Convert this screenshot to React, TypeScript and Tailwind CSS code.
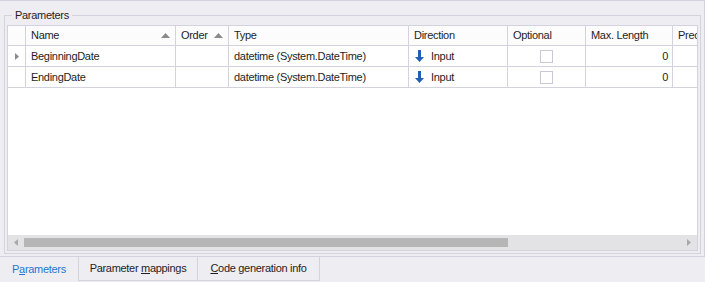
import React from "react";

const cols = [
  { key: "ind", w: 18 },
  { key: "name", w: 150, label: "Name", sort: true },
  { key: "order", w: 53, label: "Order", sort: true },
  { key: "type", w: 180, label: "Type" },
  { key: "dir", w: 99, label: "Direction" },
  { key: "opt", w: 78, label: "Optional" },
  { key: "max", w: 87, label: "Max. Length" },
  { key: "prec", w: 60, label: "Precision" },
];

const rows = [
  { name: "BeginningDate", current: true },
  { name: "EndingDate", current: false },
];

function SortUp() {
  return (
    <svg width="9" height="5" viewBox="0 0 9 5" className="shrink-0">
      <path d="M0 5 L4.5 0 L9 5 Z" fill="#8a8a8a" />
    </svg>
  );
}

function DownArrow() {
  return (
    <svg width="9" height="12" viewBox="0 0 9 12">
      <path d="M3 0 H6 V7 H9 L4.5 12 L0 7 H3 Z" fill="#1f5fb5" />
    </svg>
  );
}

function Cell({ w, className = "", children }: { w: number; className?: string; children?: React.ReactNode }) {
  return (
    <div
      className={`flex h-full shrink-0 items-center border-r border-[#d3d3dd] ${className}`}
      style={{ width: w }}
    >
      {children}
    </div>
  );
}

export default function App() {
  return (
    <div
      className="h-[282px] w-[705px] overflow-hidden bg-[#eeedf2] text-[11px] tracking-[-0.3px] text-[#1e1e1e]"
      style={{ fontFamily: "Tahoma, 'Liberation Sans', Arial, sans-serif" }}
    >
      {/* tab page */}
      <div className="h-[257px] border-t border-r border-b border-[#d3d3dd] pl-1 pr-[3px] pt-[14px]">
        <div className="relative h-[239px] border border-[#d3d3dd] px-[2px] pt-[9px]">
          <span className="absolute -top-[7px] left-[7px] bg-[#eeedf2] px-[3px] leading-[13px]">
            Parameters
          </span>
          <div className="flex h-[226px] flex-col overflow-hidden border border-[#d3d3dd] bg-white">
            {/* header */}
            <div className="flex h-[20px] shrink-0 border-b border-[#d3d3dd] bg-[#fcfcfd]">
              {cols.map((c) => (
                <Cell key={c.key} w={c.w} className="px-[5px]">
                  {c.label && <span className="flex-1 whitespace-nowrap">{c.label}</span>}
                  {c.sort && <SortUp />}
                </Cell>
              ))}
            </div>
            {rows.map((r) => (
              <div key={r.name} className="flex h-[21px] shrink-0 border-b border-[#d3d3dd]">
                <Cell w={18} className="justify-center">
                  {r.current && (
                    <svg width="4" height="7" viewBox="0 0 4 7">
                      <path d="M0 0 L4 3.5 L0 7 Z" fill="#8a8a8a" />
                    </svg>
                  )}
                </Cell>
                <Cell w={150} className="px-[5px]">{r.name}</Cell>
                <Cell w={53} />
                <Cell w={180} className="px-[5px]">datetime (System.DateTime)</Cell>
                <Cell w={99} className="gap-[7px] pl-[6px]">
                  <DownArrow />
                  <span>Input</span>
                </Cell>
                <Cell w={78} className="justify-center">
                  <span className="h-[13px] w-[13px] border border-[#c9c9d6] bg-white" />
                </Cell>
                <Cell w={87} className="justify-end pr-[4px]">0</Cell>
                <Cell w={60} />
              </div>
            ))}
            <div className="flex-1" />
            {/* horizontal scrollbar */}
            <div className="flex h-[15px] shrink-0 items-center bg-[#e3e3e5]">
              <div className="flex w-[16px] justify-center">
                <svg width="4" height="7" viewBox="0 0 4 7">
                  <path d="M4 0 L0 3.5 L4 7 Z" fill="#a9a9a9" />
                </svg>
              </div>
              <div className="flex-1">
                <div className="h-[9px] w-[484px] bg-[#b6b6b6]" />
              </div>
              <div className="flex w-[16px] justify-center">
                <svg width="4" height="7" viewBox="0 0 4 7">
                  <path d="M0 0 L4 3.5 L0 7 Z" fill="#a9a9a9" />
                </svg>
              </div>
            </div>
          </div>
        </div>
      </div>
      {/* tabs */}
      <div className="flex h-[24px] items-stretch">
        <div className="flex w-[78px] items-center justify-center text-[#1e78d2]">
          <span>
            P<u>a</u>rameters
          </span>
        </div>
        <div className="-mt-px flex w-[120px] items-center justify-center border-x border-b border-[#d3d3dd]">
          <span>
            Parameter <u>m</u>appings
          </span>
        </div>
        <div className="-mt-px flex w-[122px] items-center justify-center border-r border-b border-[#d3d3dd]">
          <span>
            <u>C</u>ode generation info
          </span>
        </div>
      </div>
    </div>
  );
}
